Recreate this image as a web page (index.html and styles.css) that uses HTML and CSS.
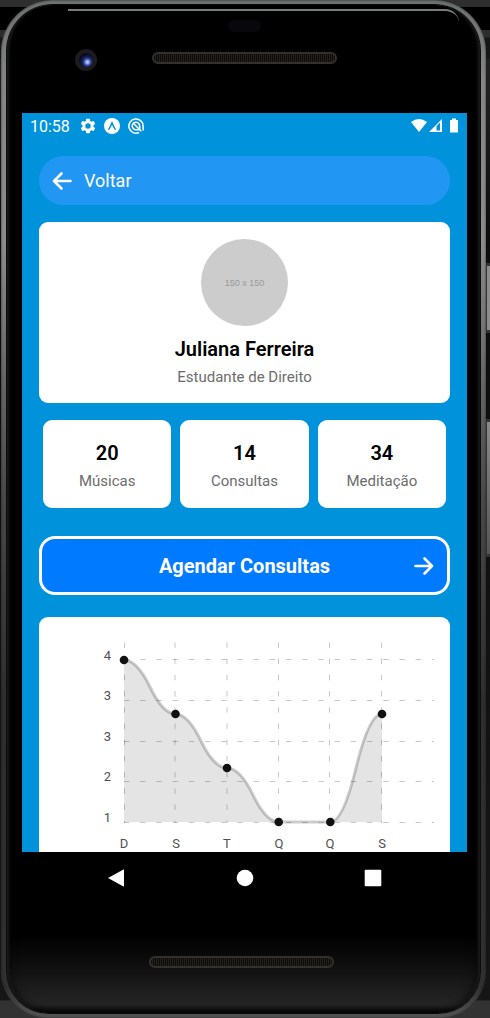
FILE: index.html
```
<!DOCTYPE html>
<html lang="pt-BR">
<head>
<meta charset="utf-8">
<meta name="viewport" content="width=device-width, initial-scale=1">
<title>Perfil</title>
<link rel="stylesheet" href="styles.css">
</head>
<body>
<div class="device">
  <div class="rail-key power"></div>
  <div class="rail-key volume"></div>
  <div class="bezel">
    <div class="forehead">
      <div class="glint"></div>
      <div class="sensor"></div>
      <div class="camera"></div>
      <div class="speaker"></div>
    </div>
    <div class="screen">
      <header class="status">
        <span class="time">10:58</span>
        <svg class="status-icon" viewBox="1.500 1.500 21 21"><path fill="#fff" d="M19.14 12.94c.04-.3.06-.61.06-.94 0-.32-.02-.64-.07-.94l2.03-1.58a.49.49 0 0 0 .12-.61l-1.92-3.32a.49.49 0 0 0-.59-.22l-2.39.96a7 7 0 0 0-1.62-.94L14.4 2.81a.48.48 0 0 0-.48-.41h-3.84a.47.47 0 0 0-.47.41l-.36 2.54a7.4 7.4 0 0 0-1.62.94l-2.39-.96a.48.48 0 0 0-.59.22L2.74 8.87a.47.47 0 0 0 .12.61l2.03 1.58c-.05.3-.09.63-.09.94s.02.64.07.94l-2.03 1.58a.49.49 0 0 0-.12.61l1.92 3.32c.12.22.37.29.59.22l2.39-.96c.5.38 1.03.7 1.62.94l.36 2.54c.05.24.24.41.48.41h3.84c.24 0 .44-.17.47-.41l.36-2.54a7 7 0 0 0 1.62-.94l2.39.96c.22.08.47 0 .59-.22l1.92-3.32a.47.47 0 0 0-.12-.61zM12 15.6a3.6 3.6 0 1 1 0-7.2 3.6 3.6 0 0 1 0 7.2z"/></svg>
        <svg class="status-icon" viewBox="0 0 18 18"><circle cx="9" cy="9" r="9" fill="#fff"/><path d="M5.500 12.500Q7.700 9.500 9 5.200Q10.300 9.500 12.500 12.500" fill="none" stroke="#0093dc" stroke-width="1.800" stroke-linecap="round" stroke-linejoin="round"/></svg>
        <svg class="status-icon" viewBox="0 0 18 18"><g fill="none" stroke="#fff" stroke-width="1.700"><path d="M12.500 16.300A8 8 0 1 1 17 9.500V14"/><path d="M13 9.800A4.200 4.200 0 1 0 9.800 13M6.500 6.500L15 15M9.500 13.200H13M13.200 9v4"/></g></svg>
        <span class="spacer"></span>
        <svg class="signals" viewBox="0 0 48 16"><path fill="#fff" d="M0 4Q8 -2 16 4L8 14zM31 1v13H18z"/><path fill="#0093dc" d="M25.500 8l3.500-3.500V12.500h-3.500z"/><path fill="#fff" d="M39 2h2V.5h4V2h2v12.500h-8z"/></svg>
      </header>
      <main class="content">
        <button class="back" type="button">
          <svg class="arrow" viewBox="0 0 20 20"><path d="M18.500 10H2M9.500 2.500L2 10l7.500 7.500"/></svg>
          <span>Voltar</span>
        </button>
        <section class="card profile">
          <div class="avatar">150 x 150</div>
          <h1 class="title">Juliana Ferreira</h1>
          <p class="caption">Estudante de Direito</p>
        </section>
        <section class="stats">
          <div class="card stat"><strong class="title">20</strong><span class="caption">Músicas</span></div>
          <div class="card stat"><strong class="title">14</strong><span class="caption">Consultas</span></div>
          <div class="card stat"><strong class="title">34</strong><span class="caption">Meditação</span></div>
        </section>
        <button class="schedule" type="button">
          <span class="schedule-label">Agendar Consultas</span>
          <svg class="arrow" viewBox="0 0 20 20"><path d="M1.500 10H18M10.500 2.500L18 10l-7.500 7.500"/></svg>
        </button>
        <section class="card chart">
          <svg class="plot" viewBox="0 0 411 260" role="img" aria-label="Gráfico semanal">
            <path class="area" d="M85 43Q98 43 111 70Q124 97 136.500 97Q149 97 162 124Q175 151 188 151Q201 151 214 178Q227 205 239.700 205H291.300Q304 205 317 151Q330 97 343 97V205H85z"/>
            <path class="line" d="M85 43Q98 43 111 70Q124 97 136.500 97Q149 97 162 124Q175 151 188 151Q201 151 214 178Q227 205 239.700 205H291.300Q304 205 317 151Q330 97 343 97"/>
            <path class="grid" d="M85 42.500H395M85 83.500H395M85 124.500H395M85 164.500H395M85 205.500H395M85.500 25.500V206M136 25.500V206M188 25.500V206M239.500 25.500V206M290.500 25.500V206M342.500 25.500V206"/>
            <g class="dots"><circle cx="85" cy="43" r="4.300"/><circle cx="136.500" cy="97" r="4.300"/><circle cx="188" cy="151" r="4.300"/><circle cx="239.700" cy="205" r="4.300"/><circle cx="291.300" cy="205" r="4.300"/><circle cx="343" cy="97" r="4.300"/></g>
            <g class="labels y"><text x="72" y="43">4</text><text x="72" y="83">3</text><text x="72" y="124">3</text><text x="72" y="164">2</text><text x="72" y="205">1</text></g>
            <g class="labels x"><text x="85" y="231">D</text><text x="137" y="231">S</text><text x="188" y="231">T</text><text x="240" y="231">Q</text><text x="291" y="231">Q</text><text x="343" y="231">S</text></g>
          </svg>
        </section>
      </main>
    </div>
    <nav class="navbar">
      <button type="button" aria-label="Voltar"><svg viewBox="0 0 18 18"><path d="M15.500 .5q.5-.3.5.2v16.600q0 .5-.5.2L0 9z"/></svg></button>
      <button type="button" aria-label="Início"><svg viewBox="0 0 18 18"><circle cx="9" cy="9" r="8.300"/></svg></button>
      <button type="button" aria-label="Recentes"><svg viewBox="0 0 18 18"><rect x=".7" y=".7" width="16.600" height="16.600" rx="1"/></svg></button>
    </nav>
    <div class="chin"><div class="speaker"></div></div>
  </div>
</div>
</body>
</html>
```
FILE: styles.css
```
* { box-sizing: border-box; }

body {
  margin: 0;
  padding: 0 4px 0 1px;
  background: linear-gradient(#2e2e2e 0 7px, #000 7px 30px, #2c2c2c 30px 37px, #161616 38px 58px, #202020 59px 90px, #0c0c0c 240px, #161616 calc(100% - 18px), #323232 calc(100% - 17px));
  font-family: Roboto, "Noto Sans", sans-serif;
  color: #000;
}

button {
  border: 0;
  padding: 0;
  background: none;
  font: inherit;
  color: inherit;
}

/* Phone body */
.device {
  position: relative;
  height: 100vh;
  min-height: 640px;
  padding: 5px 6px;
  border-radius: 52px 52px 46px 46px;
  background: linear-gradient(#6c706f 0, #858585 80px, #8c8c8c 240px, #666 380px, #484848 500px, #2e2e2e 700px, #303030 calc(100% - 30px), #555 100%);
  box-shadow: inset 0 0 2px #1a1a1a;
}

.rail-key {
  position: absolute;
  right: -4px;
  width: 4px;
  border: solid #333;
  border-width: 3px 0 3px 1px;
  background: #8c8c8c;
}

.power { top: 263px; height: 70px; }
.volume { top: 419px; height: 138px; background: linear-gradient(#8a8a8a, #555); }

.bezel {
  display: flex;
  flex-direction: column;
  height: 100%;
  padding: 0 13px 0 15px;
  border-radius: 46px 46px 42px 42px;
  background: linear-gradient(#000 calc(100% - 80px), #0e0e0e calc(100% - 48px), #262626 calc(100% - 8px), #080808);
  box-shadow: inset 5px 0 3px -3px #1c1c1c, inset -5px 0 3px -3px #1c1c1c, inset 0 0 12px #000, 0 0 0 1px #0c0c0c;
}

.forehead {
  position: relative;
  flex: none;
  height: 108px;
}

.glint {
  position: absolute;
  top: 4px;
  left: 46px;
  right: 8px;
  height: 14px;
  border-top: 2px solid #747d7b;
  border-radius: 0 32px 0 0;
}

.sensor {
  position: absolute;
  top: 15px;
  left: 50%;
  width: 33px;
  height: 12px;
  margin-left: -17px;
  border-radius: 6px;
  background: #08080c;
}

.camera {
  position: absolute;
  top: 44px;
  left: 53px;
  width: 22px;
  height: 22px;
  border: 4px solid #1c1c1e;
  border-radius: 50%;
  background: radial-gradient(circle at 60% 65%, #b4c4ff 0 1px, #4357b5 3px, #172057 5px, #080b20 8px);
}

.speaker {
  width: 185px;
  height: 12px;
  border: 2px solid #33312e;
  border-radius: 6px;
  background: repeating-linear-gradient(90deg, #0d0c0a 0 1px, #24211d 1px 2px);
}

.forehead {
  display: flex;
  justify-content: center;
  padding-top: 47px;
}

.chin {
  display: flex;
  justify-content: center;
  flex: none;
  height: 109px;
  padding: 52px 6px 0 0;
}

/* App screen */
.screen {
  display: flex;
  flex: 1;
  flex-direction: column;
  min-height: 0;
  overflow: hidden;
  background: #0093dc;
}

.status {
  display: flex;
  flex: none;
  align-items: center;
  gap: 8px;
  height: 26px;
  padding: 0 8px;
  color: #fff;
}

.time { font-size: 16px; margin-right: 2px; }
.status-icon { width: 16px; height: 16px; }
.spacer { flex: 1; }
.signals { width: 48px; height: 16px; }

.content {
  display: flex;
  flex-direction: column;
  padding: 17px 17px 0;
}

.back {
  display: flex;
  align-items: center;
  gap: 12px;
  height: 49px;
  padding: 0 13px;
  border-radius: 25px;
  background: #2196f3;
  color: #fff;
  font-size: 18px;
}

.arrow {
  width: 20px;
  height: 20px;
  fill: none;
  stroke: #fff;
  stroke-width: 2.6;
  stroke-linecap: round;
  stroke-linejoin: round;
}

.card {
  border-radius: 9px;
  background: #fff;
}

.profile {
  display: flex;
  flex-direction: column;
  align-items: center;
  margin-top: 17px;
  padding: 17px 17px 16px;
}

.avatar {
  display: grid;
  place-items: center;
  width: 87px;
  height: 87px;
  margin-bottom: 11px;
  border-radius: 50%;
  background: #ccc;
  color: #999;
  font: 9px "Liberation Sans", sans-serif;
}

.title {
  margin: 0;
  font-size: 20px;
  font-weight: 600;
  line-height: 24px;
}

.caption {
  margin: 6px 0 0;
  color: #6c6c6c;
  font-size: 15px;
  line-height: 20px;
}

.stats {
  display: grid;
  grid-template-columns: repeat(3, 1fr);
  gap: 9px;
  margin: 17px 4px 0;
}

.stat {
  display: flex;
  flex-direction: column;
  align-items: center;
  padding: 21px 8px 17px;
}

.schedule {
  display: flex;
  align-items: center;
  height: 59px;
  margin-top: 28px;
  padding: 0 13px;
  border: 3px solid #fff;
  border-radius: 16px;
  background: #007aff;
  color: #fff;
  font-size: 20px;
  font-weight: 700;
}

.schedule-label { flex: 1; padding-left: 20px; }

.chart { margin-top: 22px; }
.plot { display: block; width: 100%; }
.area { fill: #e4e4e4; }
.line { fill: none; stroke: #000; stroke-opacity: .2; stroke-width: 3; }
.grid { fill: none; stroke: #000; stroke-opacity: .22; stroke-dasharray: 5.4 10.8; }
.dots { fill: #111; }
.labels { fill: #505050; font-size: 13px; }
.labels.x { text-anchor: middle; }
.labels.y { text-anchor: end; }

/* System navigation */
.navbar {
  display: grid;
  grid-template-columns: repeat(3, 128px);
  justify-content: center;
  flex: none;
  height: 52px;
}

.navbar button { display: grid; place-items: center; }
.navbar svg { width: 18px; height: 18px; fill: #fff; }
```
